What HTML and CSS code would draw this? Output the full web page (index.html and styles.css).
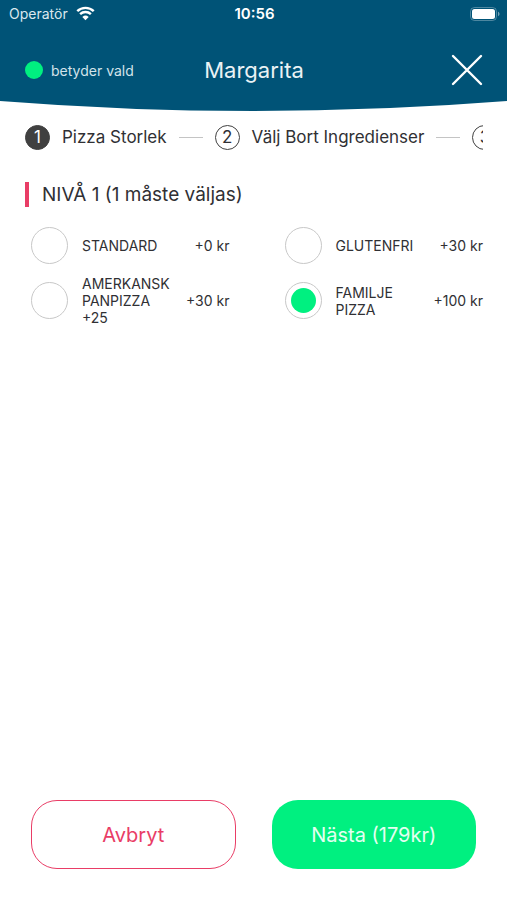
FILE: index.html
```
<!DOCTYPE html>
<html lang="sv">
<head>
<meta charset="utf-8">
<meta name="viewport" content="width=device-width, initial-scale=1">
<title>Margarita</title>
<link rel="stylesheet" href="styles.css">
</head>
<body>
<div class="app">
  <header class="header">
    <div class="status">
      <div class="carrier">
        <span>Operatör</span>
        <svg class="wifi" viewBox="0 0 18 14" aria-hidden="true">
          <path d="M1.2 4.8a11.3 11.3 0 0 1 15.6 0M3.9 7.7a7.4 7.4 0 0 1 10.2 0" fill="none" stroke="currentColor" stroke-width="2.3"/>
          <path d="M6 10.2a4.4 4.4 0 0 1 6 0L9 13.4z" fill="currentColor"/>
        </svg>
      </div>
      <time class="clock">10:56</time>
      <svg class="battery" viewBox="0 0 30 14" aria-hidden="true">
        <rect x=".5" y=".5" width="26" height="13" rx="4" fill="none" stroke="#fff" stroke-opacity=".3"/>
        <rect x="2" y="2" width="23" height="10" rx="2.5" fill="#fff"/>
        <path d="M28 4.8c2 .7 2 3.7 0 4.4z" fill="#fff" fill-opacity=".45"/>
      </svg>
    </div>
    <div class="titlebar">
      <p class="legend"><span class="legend-dot"></span>betyder vald</p>
      <h1 class="title">Margarita</h1>
      <button class="close" type="button" aria-label="Stäng">
        <svg viewBox="0 0 32 32" aria-hidden="true"><path d="M2 2l28 28M30 2L2 30" fill="none" stroke="currentColor" stroke-width="2.4" stroke-linecap="round"/></svg>
      </button>
    </div>
  </header>
  <svg class="curve" viewBox="0 0 100 10" preserveAspectRatio="none" aria-hidden="true"><path d="M0 0Q50 20 100 0z"/></svg>

  <main class="content">
    <ol class="steps">
      <li class="step"><span class="step-number current">1</span>Pizza Storlek</li>
      <li class="step"><span class="step-number">2</span>Välj Bort Ingredienser</li>
      <li class="step"><span class="step-number">3</span></li>
    </ol>
    <h2 class="level" id="level">NIVÅ 1 (1 måste väljas)</h2>
    <div class="options" role="radiogroup" aria-labelledby="level">
      <label class="option"><input type="radio" name="size"><span class="name">STANDARD</span><span class="price">+0 kr</span></label>
      <label class="option"><input type="radio" name="size"><span class="name">GLUTENFRI</span><span class="price">+30 kr</span></label>
      <label class="option"><input type="radio" name="size"><span class="name">AMERKANSK PANPIZZA +25</span><span class="price">+30 kr</span></label>
      <label class="option"><input type="radio" name="size" checked><span class="name">FAMILJE PIZZA</span><span class="price">+100 kr</span></label>
    </div>
  </main>

  <footer class="actions">
    <button class="action cancel" type="button">Avbryt</button>
    <button class="action next" type="button">Nästa (179kr)</button>
  </footer>
</div>
</body>
</html>
```
FILE: styles.css
```
* {
  box-sizing: border-box;
}

body {
  margin: 0;
  background: #fff;
  color: #303034;
  font-family: Inter, "Liberation Sans", sans-serif;
}

button {
  font: inherit;
  cursor: pointer;
}

.app {
  display: flex;
  flex-direction: column;
  min-height: 100vh;
}

.header {
  background: #005377;
  color: #fff;
}

.status {
  display: grid;
  grid-template-columns: 1fr auto 1fr;
  align-items: center;
  height: 27px;
  padding: 0 7px 0 9px;
  font-size: 14px;
}

.carrier {
  display: flex;
  align-items: center;
  gap: 8px;
  color: #dbe8ee;
}

.wifi {
  width: 19px;
  height: 15px;
  color: #fff;
}

.clock {
  font-size: 15px;
  font-weight: 600;
}

.battery {
  justify-self: end;
  width: 30px;
  height: 14px;
}

.titlebar {
  display: grid;
  grid-template-columns: 1fr auto 1fr;
  align-items: center;
  height: 74px;
  padding: 12px 24px 0 25px;
}

.legend {
  display: flex;
  align-items: center;
  gap: 8px;
  margin: 0;
  color: #d3e3ea;
  font-size: 14px;
}

.legend-dot {
  width: 18px;
  height: 18px;
  border-radius: 50%;
  background: #00f080;
}

.title {
  margin: 0;
  color: #eaf2f5;
  font-size: 22px;
  font-weight: 400;
}

.close {
  justify-self: end;
  width: 32px;
  height: 32px;
  padding: 0;
  border: 0;
  background: none;
  color: #fff;
}

.close svg {
  display: block;
}

.curve {
  display: block;
  width: 100%;
  height: 10px;
  fill: #005377;
}

.content {
  flex: 1;
  padding: 13px 24px 0 25px;
}

.steps {
  display: flex;
  gap: 12px;
  margin: 0;
  padding: 0;
  overflow: hidden;
  list-style: none;
  font-size: 17px;
  line-height: 26px;
  white-space: nowrap;
}

.step {
  display: flex;
  flex: none;
  align-items: center;
  gap: 12px;
}

.step:not(:last-child)::after {
  content: "";
  width: 24px;
  height: 1px;
  background: #c4c4c4;
}

.step-number {
  width: 25px;
  height: 25px;
  border: 1px solid #404040;
  border-radius: 50%;
  line-height: 23px;
  text-align: center;
}

.step-number.current {
  background: #404040;
  color: #fff;
}

.level {
  margin: 32px 0 0;
  padding-left: 13px;
  border-left: 4px solid #e93d66;
  font-size: 19px;
  font-weight: 400;
  line-height: 25px;
}

.options {
  display: grid;
  grid-template-columns: 1fr 1fr;
  gap: 11px 55px;
  margin-top: 20px;
  padding-left: 6px;
}

.option {
  display: flex;
  align-items: center;
  font-size: 14px;
  line-height: 17px;
}

.option input {
  display: grid;
  flex: none;
  place-items: center;
  width: 37px;
  height: 37px;
  margin: 0 14px 0 0;
  border: 1px solid #c8c8c8;
  border-radius: 50%;
  appearance: none;
}

.option input:checked::before {
  content: "";
  width: 25px;
  height: 25px;
  border-radius: 50%;
  background: #00f080;
}

.name {
  flex: 1;
}

.price {
  margin-left: 10px;
  white-space: nowrap;
}

.actions {
  display: grid;
  grid-template-columns: 1fr 1fr;
  gap: 36px;
  padding: 0 31px 31px;
}

.action {
  height: 69px;
  border: 1px solid transparent;
  border-radius: 26px;
  font-size: 20px;
}

.cancel {
  border-color: #e93d66;
  background: #fff;
  color: #e93d66;
}

.next {
  background: #00f080;
  color: #e3fff1;
}
```
